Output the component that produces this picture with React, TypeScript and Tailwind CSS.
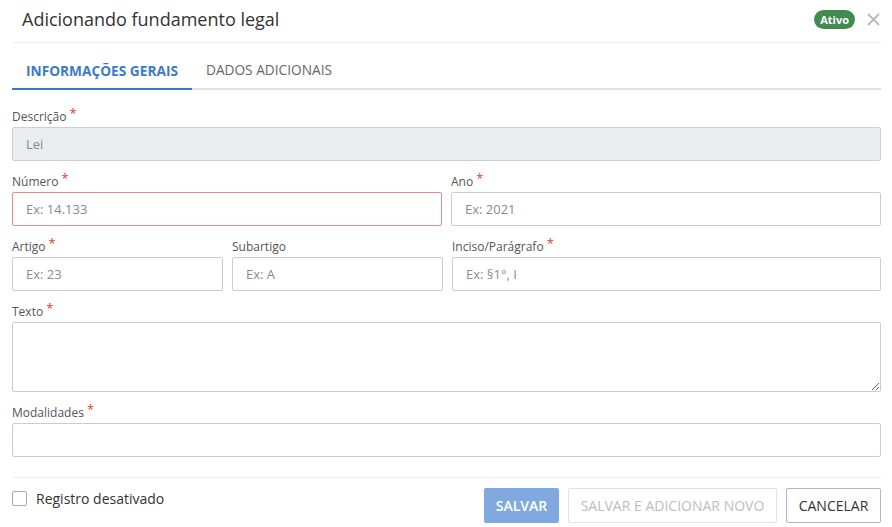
import React from 'react';

const Req = () => <span className="relative -top-[3px] ml-[3px] text-[13px] leading-none text-[#e53935]">*</span>;

const Label: React.FC<{ text: string; required?: boolean }> = ({ text, required }) => (
  <label className="block h-4 mb-1 pt-[2px] text-[12px] leading-4 text-[#555]">
    {text}
    {required && <Req />}
  </label>
);

const Field: React.FC<{ label: string; required?: boolean; placeholder?: string; value?: string; className?: string; error?: boolean; disabled?: boolean }> = ({ label, required, placeholder, value, className, error, disabled }) => (
  <div className={className}>
    <Label text={label} required={required} />
    <input
      readOnly
      placeholder={placeholder}
      value={value}
      className={`block w-full h-[34px] px-[13px] rounded-[2px] border text-[13px] outline-none placeholder:text-[#8a8a8a] ${
        disabled ? 'bg-[#ebecef] border-[#cfcfcf] text-[#888]' : error ? 'bg-white border-[#e88a8a]' : 'bg-white border-[#cccccc]'
      }`}
    />
  </div>
);

const App: React.FC = () => {
  return (
    <div className="w-[892px] h-[527px] bg-white pl-3 pr-[11px] text-[#333]" style={{ fontFamily: '"Open Sans", sans-serif' }}>
      {/* Header */}
      <div className="flex items-center justify-between h-[36px] pl-[10px] pt-[1px]">
        <h1 className="text-[18px] text-[#333] leading-none">Adicionando fundamento legal</h1>
        <div className="flex items-center gap-3 pt-[2px]">
          <span className="h-[19px] px-[6px] rounded-full bg-[#418b51] text-white text-[11px] font-bold leading-[19px]">Ativo</span>
          <svg width="13" height="13" viewBox="0 0 13 13" className="mr-[1px]">
            <path d="M1 1L12 12M12 1L1 12" stroke="#b8b8b8" strokeWidth="1.8" />
          </svg>
        </div>
      </div>
      <div className="mt-[6px] border-t border-[#f0f0f0]" />

      {/* Tabs */}
      <div className="flex h-[47px] border-b-2 border-[#dee0e4]">
        <div className="flex items-center px-[14px] pt-[11px] -mb-[2px] border-b-2 border-[#3478c6] text-[13.7px] font-bold text-[#3a7bc8]">
          INFORMAÇÕES GERAIS
        </div>
        <div className="flex items-center px-[14px] pt-[9px] text-[13.7px] text-[#666]">DADOS ADICIONAIS</div>
      </div>

      {/* Form */}
      <div className="mt-[17px] flex flex-col gap-[11px]">
        <Field label="Descrição" required value="Lei" disabled />
        <div className="grid grid-cols-2 gap-[9px]">
          <Field label="Número" required placeholder="Ex: 14.133" error />
          <Field label="Ano" required placeholder="Ex: 2021" />
        </div>
        <div className="grid grid-cols-[211px_211px_1fr] gap-[9px]">
          <Field label="Artigo" required placeholder="Ex: 23" />
          <Field label="Subartigo" placeholder="Ex: A" />
          <Field label="Inciso/Parágrafo" required placeholder="Ex: §1°, I" />
        </div>
        <div>
          <Label text="Texto" required />
          <textarea className="block w-full h-[70px] rounded-[2px] border border-[#cccccc] bg-white outline-none" />
        </div>
        <div>
          <Label text="Modalidades" required />
          <div className="h-[34px] rounded-[2px] border border-[#cccccc] bg-white" />
        </div>
      </div>

      {/* Footer */}
      <div className="mt-[20px] border-t border-[#f0f0f0]" />
      <div className="flex items-start justify-between pt-[10px]">
        <label className="flex items-center gap-[9px] text-[14px] text-[#333]">
          <span className="w-[15px] h-[15px] rounded-[2px] border border-[#a9a9a9] bg-white" />
          Registro desativado
        </label>
        <div className="flex gap-[9px]">
          <button className="h-[35px] w-[75px] rounded-[2px] bg-[#80aadf] text-white text-[14px] font-semibold">SALVAR</button>
          <button className="h-[35px] w-[209px] rounded-[2px] border border-[#e2e2e2] bg-white text-[#bdbdbd] text-[14px]">
            SALVAR E ADICIONAR NOVO
          </button>
          <button className="h-[35px] w-[95px] rounded-[2px] border border-[#b5b5b5] bg-white text-[#333] text-[14px]">CANCELAR</button>
        </div>
      </div>
    </div>
  );
};

export default App;
